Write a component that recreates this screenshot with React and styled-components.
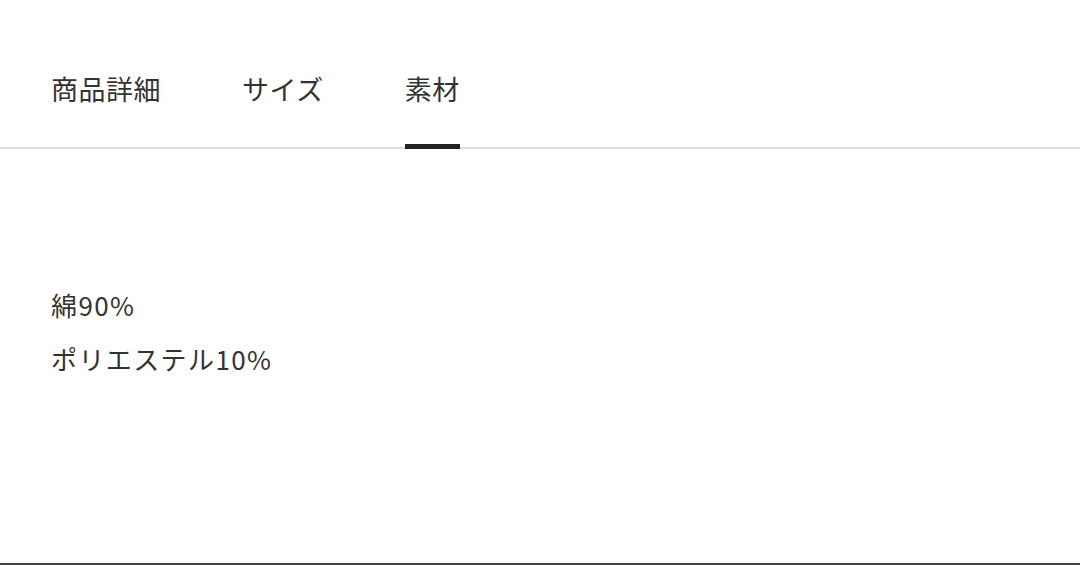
import React, { useState } from 'react'
import styled, { createGlobalStyle } from 'styled-components'

const GlobalStyle = createGlobalStyle`
  html, body {
    margin: 0;
    height: 100%;
    background: #fff;
  }
  body {
    font-family: "Noto Sans CJK JP", "Noto Sans", sans-serif;
    color: #333;
  }
  #root {
    height: 100%;
  }
`

const Page = styled.div`
  height: 565px;
  box-sizing: border-box;
  border-bottom: 2px solid #444;
  display: flex;
  flex-direction: column;
`

const TabBar = styled.div`
  display: flex;
  gap: 81px;
  padding: 0 51px;
  height: 147px;
  align-items: stretch;
  border-bottom: 2px solid #dedede;
`

const Tab = styled.button`
  background: none;
  border: none;
  padding: 0;
  margin-bottom: -2px;
  font-family: inherit;
  font-size: 27px;
  letter-spacing: 0.5px;
  color: #333;
  cursor: pointer;
  display: flex;
  align-items: flex-start;
  padding-top: 69px;
  border-bottom: 5px solid ${p => (p.$active ? '#222' : 'transparent')};
  box-sizing: border-box;
`

const Panel = styled.div`
  padding: 138px 51px 0;
`

const Line = styled.p`
  margin: 0 0 18px;
  font-size: 26px;
  letter-spacing: 1.4px;
  line-height: 36px;
  color: #333;
`

const tabs = ['商品詳細', 'サイズ', '素材']

export default function App() {
  const [active, setActive] = useState(2)
  return (
    <Page>
      <GlobalStyle />
      <TabBar>
        {tabs.map((t, i) => (
          <Tab key={t} $active={i === active} onClick={() => setActive(i)}>
            {t}
          </Tab>
        ))}
      </TabBar>
      <Panel>
        <Line>綿90%</Line>
        <Line>ポリエステル10%</Line>
      </Panel>
    </Page>
  )
}
